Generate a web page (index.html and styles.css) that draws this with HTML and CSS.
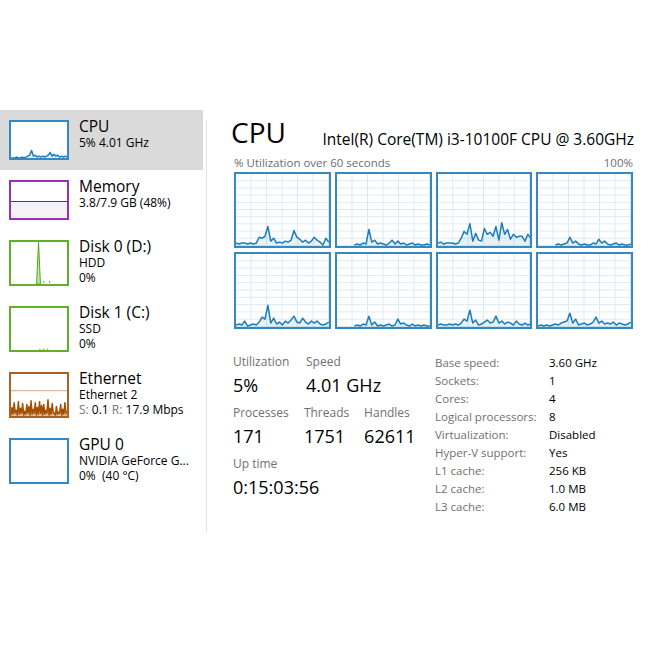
FILE: index.html
```html
<!DOCTYPE html>
<html lang="en">
<head>
    <meta charset="UTF-8">
    <meta name="viewport" content="width=device-width, initial-scale=1.0">
    <title>Task Manager - Performance</title>
    <link rel="stylesheet" href="styles.css">
</head>
<body>
    <div class="app">
        <aside class="sidebar">
            <div class="item selected">
                <div class="thumb cpu"><svg id="mini-cpu" viewBox="0 0 60 38" preserveAspectRatio="none"></svg></div>
                <div class="info">
                    <div class="name">CPU</div>
                    <div class="sub">5% 4.01 GHz</div>
                </div>
            </div>
            <div class="item">
                <div class="thumb mem">
                    <div class="mem-free"></div>
                    <div class="mem-used"></div>
                </div>
                <div class="info">
                    <div class="name">Memory</div>
                    <div class="sub">3.8/7.9 GB (48%)</div>
                </div>
            </div>
            <div class="item tall">
                <div class="thumb disk">
                    <svg viewBox="0 0 58 44" preserveAspectRatio="none">
                        <polygon points="26.5,44 28.5,0 30.5,44" fill="#c4e2ad" stroke="#4da60c" stroke-width="1"/>
                        <line x1="34" y1="43" x2="34" y2="41" stroke="#4da60c"/>
                        <line x1="40" y1="43" x2="40" y2="41" stroke="#4da60c"/>
                    </svg>
                </div>
                <div class="info">
                    <div class="name">Disk 0 (D:)</div>
                    <div class="sub">HDD</div>
                    <div class="sub">0%</div>
                </div>
            </div>
            <div class="item tall">
                <div class="thumb disk">
                    <svg viewBox="0 0 58 44" preserveAspectRatio="none">
                        <line x1="30" y1="44" x2="30" y2="42.5" stroke="#4da60c"/>
                        <line x1="34" y1="44" x2="34" y2="42.5" stroke="#4da60c"/>
                        <line x1="38" y1="44" x2="38" y2="42.5" stroke="#4da60c"/>
                    </svg>
                </div>
                <div class="info">
                    <div class="name">Disk 1 (C:)</div>
                    <div class="sub">SSD</div>
                    <div class="sub">0%</div>
                </div>
            </div>
            <div class="item tall">
                <div class="thumb net">
                    <svg id="mini-net" viewBox="0 0 58 44" preserveAspectRatio="none">
                        <line x1="0" y1="17.5" x2="58" y2="17.5" stroke="#d3a57e" stroke-width="1"/>
                    </svg>
                </div>
                <div class="info">
                    <div class="name">Ethernet</div>
                    <div class="sub">Ethernet 2</div>
                    <div class="sub"><span class="dim">S:</span> 0.1 <span class="dim">R:</span> 17.9 Mbps</div>
                </div>
            </div>
            <div class="item tall">
                <div class="thumb gpu"></div>
                <div class="info">
                    <div class="name">GPU 0</div>
                    <div class="sub">NVIDIA GeForce G...</div>
                    <div class="sub">0%&nbsp; (40 °C)</div>
                </div>
            </div>
        </aside>

        <div class="divider"></div>

        <main class="main">
            <div class="head">
                <h1>CPU</h1>
                <span class="model">Intel(R) Core(TM) i3-10100F CPU @ 3.60GHz</span>
            </div>
            <div class="caption">
                <span>% Utilization over 60 seconds</span>
                <span>100%</span>
            </div>
            <div class="cores">
                <div class="core"><svg viewBox="0 0 96 74" preserveAspectRatio="none"></svg></div>
                <div class="core"><svg viewBox="0 0 96 74" preserveAspectRatio="none"></svg></div>
                <div class="core"><svg viewBox="0 0 96 74" preserveAspectRatio="none"></svg></div>
                <div class="core"><svg viewBox="0 0 96 74" preserveAspectRatio="none"></svg></div>
                <div class="core"><svg viewBox="0 0 96 74" preserveAspectRatio="none"></svg></div>
                <div class="core"><svg viewBox="0 0 96 74" preserveAspectRatio="none"></svg></div>
                <div class="core"><svg viewBox="0 0 96 74" preserveAspectRatio="none"></svg></div>
                <div class="core"><svg viewBox="0 0 96 74" preserveAspectRatio="none"></svg></div>
            </div>

            <div class="stats">
                <div class="live">
                    <div class="stat-row">
                        <div class="stat">
                            <div class="label">Utilization</div>
                            <div class="value">5%</div>
                        </div>
                        <div class="stat">
                            <div class="label">Speed</div>
                            <div class="value">4.01 GHz</div>
                        </div>
                    </div>
                    <div class="stat-row">
                        <div class="stat">
                            <div class="label">Processes</div>
                            <div class="value">171</div>
                        </div>
                        <div class="stat narrow">
                            <div class="label">Threads</div>
                            <div class="value">1751</div>
                        </div>
                        <div class="stat">
                            <div class="label">Handles</div>
                            <div class="value">62611</div>
                        </div>
                    </div>
                    <div class="stat-row">
                        <div class="stat">
                            <div class="label">Up time</div>
                            <div class="value">0:15:03:56</div>
                        </div>
                    </div>
                </div>
                <dl class="specs">
                    <dt>Base speed:</dt><dd>3.60 GHz</dd>
                    <dt>Sockets:</dt><dd>1</dd>
                    <dt>Cores:</dt><dd>4</dd>
                    <dt>Logical processors:</dt><dd>8</dd>
                    <dt>Virtualization:</dt><dd>Disabled</dd>
                    <dt>Hyper-V support:</dt><dd>Yes</dd>
                    <dt>L1 cache:</dt><dd>256 KB</dd>
                    <dt>L2 cache:</dt><dd>1.0 MB</dd>
                    <dt>L3 cache:</dt><dd>6.0 MB</dd>
                </dl>
            </div>
        </main>
    </div>

    <script>
        var SVG_NS = 'http://www.w3.org/2000/svg';

        // utilization history per logical processor, px above the bottom (null = no sample yet)
        var n = null;
        var cores = [
            [3,2,3,3,2,3,2,3,9,8,10,20,5,8,3,4,3,5,4,6,16,9,7,4,6,3,5,9,6,4,1,8,4],
            [n,n,n,n,n,n,1,2,1,3,2,17,4,6,2,3,2,1,3,6,2,5,2,3,1,2,3,1,2,1,1,2,1],
            [3,4,2,3,3,3,2,3,8,15,12,23,5,13,6,5,18,12,14,10,20,6,24,12,17,7,12,9,10,10,5,12,8],
            [n,n,n,n,n,n,1,2,1,2,3,9,3,5,2,1,2,1,1,3,2,7,3,5,2,1,2,3,1,2,1,1,2],
            [2,3,2,6,1,2,3,2,5,10,8,22,4,9,3,5,2,6,4,7,11,5,4,9,5,3,6,4,6,3,2,3,5],
            [n,n,n,n,n,n,1,2,1,3,2,11,2,5,1,2,1,2,3,1,2,8,3,4,2,1,3,1,2,1,2,1,1],
            [2,3,2,2,3,2,3,2,4,8,6,17,4,7,2,3,5,7,4,5,11,4,6,3,5,4,2,6,3,2,4,2,3],
            [1,2,1,2,1,2,3,2,4,5,6,14,4,8,2,3,4,2,3,5,10,4,6,3,4,3,5,2,4,3,2,3,5]
        ];

        var miniCpu = [0,0,0,1,0,0,1,0,1,2,3,8,2,3,1,2,1,2,1,2,3,6,2,4,2,3,1,2,1,2,1];

        var miniNet = [];
        var peaks = [9,14,6,15,8,13,5,12,10,16,7,14,9,15,11,12,6,17,8,13,3,10,4,12,7,14,5];
        for (var p = 0; p < peaks.length; p++) {
            miniNet.push(1 + (p % 3));
            miniNet.push(peaks[p]);
        }

        function draw(svg, data, w, h, stroke, fill) {
            var step = w / (data.length - 1);
            var pts = [];
            for (var i = 0; i < data.length; i++) {
                if (data[i] === null) continue;
                pts.push((i * step).toFixed(2) + ',' + (h - data[i]).toFixed(2));
            }
            var first = pts[0].split(',')[0], last = pts[pts.length - 1].split(',')[0];

            var area = document.createElementNS(SVG_NS, 'polygon');
            area.setAttribute('points', first + ',' + h + ' ' + pts.join(' ') + ' ' + last + ',' + h);
            area.setAttribute('fill', fill);
            svg.appendChild(area);

            var line = document.createElementNS(SVG_NS, 'polyline');
            line.setAttribute('points', pts.join(' '));
            line.setAttribute('fill', 'none');
            line.setAttribute('stroke', stroke);
            line.setAttribute('stroke-width', '1.5');
            line.setAttribute('stroke-linejoin', 'round');
            line.setAttribute('vector-effect', 'non-scaling-stroke');
            svg.appendChild(line);
        }

        var coreSvgs = document.querySelectorAll('.core svg');
        for (var c = 0; c < coreSvgs.length; c++) {
            draw(coreSvgs[c], cores[c], 96, 74, '#1b7dbc', 'rgba(17,125,187,0.1)');
        }
        draw(document.getElementById('mini-cpu'), miniCpu, 60, 38, '#1b7dbc', 'rgba(17,125,187,0.1)');
        draw(document.getElementById('mini-net'), miniNet, 58, 44, '#a74f01', 'rgba(167,79,1,0.4)');
    </script>
</body>
</html>
```

FILE: styles.css
```css
* {
    box-sizing: border-box;
}
body {
    margin: 0;
    background: #fff;
    color: #000;
    font-family: "Open Sans", "Noto Sans", sans-serif;
}
.app {
    display: flex;
    align-items: flex-start;
    padding-top: 110px;
}

/* left list of devices */
.sidebar {
    width: 203px;
    flex-shrink: 0;
}
.item {
    display: flex;
    height: 60px;
    padding: 10px 0 10px 9px;
}
.item.tall {
    height: 66px;
}
.item.selected {
    background: #dadada;
}
.thumb {
    width: 60px;
    height: 40px;
    flex-shrink: 0;
    border: 2px solid;
    background: #fff;
}
.item.tall .thumb {
    height: 46px;
}
.thumb svg {
    display: block;
    width: 100%;
    height: 100%;
}
.thumb.cpu,
.thumb.gpu {
    border-color: #3489c2;
}
.thumb.mem {
    display: flex;
    flex-direction: column;
    border-color: #9532b5;
}
.mem-free {
    height: 19px;
}
.mem-used {
    flex: 1;
    background: #f4f2f4;
    border-top: 1px solid #8b12ae;
}
.thumb.disk {
    border-color: #62af2a;
}
.thumb.net {
    border-color: #ae6121;
}
.info {
    margin: -2px 0 0 10px;
    white-space: nowrap;
}
.name {
    font-size: 15.5px;
    line-height: 17px;
}
.sub {
    font-size: 12px;
    line-height: 15px;
}
.sub .dim {
    color: #767676;
}

.divider {
    width: 1px;
    height: 412px;
    margin: 10px 0 0 3px;
    background: #e3e3e3;
}

/* detail pane */
.main {
    width: 403px;
    margin-left: 24px;
}
.head {
    display: flex;
    justify-content: space-between;
    align-items: flex-end;
    height: 36px;
    margin-top: 4px;
}
.head h1 {
    margin: 0;
    font-size: 28px;
    font-weight: normal;
    line-height: 36px;
}
.model {
    font-size: 15.5px;
    line-height: 20px;
    margin-bottom: 1px;
}
.caption {
    display: flex;
    justify-content: space-between;
    margin: 6px 1px 2px 3px;
    font-size: 11.5px;
    line-height: 14px;
    color: #6d6d6d;
}
.cores {
    display: grid;
    grid-template-columns: repeat(4, 1fr);
    grid-template-rows: 76px 77px;
    gap: 4px;
    margin: 0 1px 0 3px;
}
.core {
    border: 2px solid #3489c2;
    background-color: #fff;
    background-image:
        linear-gradient(to right, transparent calc(100% - 1px), #d9eaf4 calc(100% - 1px)),
        linear-gradient(to bottom, transparent calc(100% - 1px), #d9eaf4 calc(100% - 1px));
    background-size: calc(100% / 6) 100%, 100% 10%;
}
.core svg {
    display: block;
    width: 100%;
    height: 100%;
}

.stats {
    display: flex;
    align-items: flex-start;
    margin-top: 25px;
}
.live {
    width: 204px;
    padding-left: 2px;
}
.stat-row {
    display: flex;
    margin-bottom: 8px;
}
.stat {
    width: 73px;
    white-space: nowrap;
}
.stat.narrow {
    width: 62px;
}
.label {
    font-size: 12px;
    line-height: 16px;
    color: #707070;
}
.value {
    margin-top: 3px;
    font-size: 18px;
    line-height: 24px;
}
.specs {
    display: grid;
    grid-template-columns: 114px auto;
    align-content: start;
    margin: 0;
    font-size: 11.5px;
    line-height: 18px;
}
.specs dt {
    color: #707070;
}
.specs dd {
    margin: 0;
}
```
